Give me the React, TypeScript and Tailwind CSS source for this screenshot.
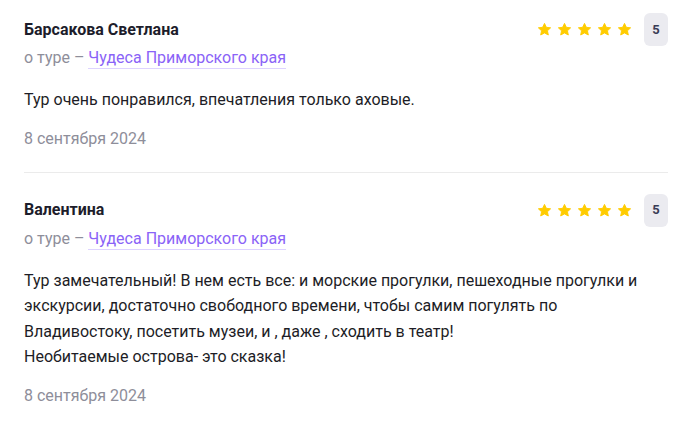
import React from 'react';

type Review = { name: string; tour: string; text: string[]; date: string; rating: number };

const reviews: Review[] = [
  {
    name: 'Барсакова Светлана',
    tour: 'Чудеса Приморского края',
    text: ['Тур очень понравился, впечатления только аховые.'],
    date: '8 сентября 2024',
    rating: 5,
  },
  {
    name: 'Валентина',
    tour: 'Чудеса Приморского края',
    text: [
      'Тур замечательный! В нем есть все: и морские прогулки, пешеходные прогулки и экскурсии, достаточно свободного времени, чтобы самим погулять по Владивостоку, посетить музеи, и , даже , сходить в театр!',
      'Необитаемые острова- это сказка!',
    ],
    date: '8 сентября 2024',
    rating: 5,
  },
];

const Star: React.FC = () => (
  <svg width="15" height="15" viewBox="0 0 24 24" className="text-[#ffcc00]">
    <path
      fill="currentColor"
      stroke="currentColor"
      strokeWidth="1.5"
      strokeLinejoin="round"
      d="M12 2.2l2.95 6.3 6.85.8-5.06 4.7 1.36 6.8L12 17.4l-6.1 3.4 1.36-6.8L2.2 9.3l6.85-.8z"
    />
  </svg>
);

const ReviewItem: React.FC<{ review: Review; first?: boolean; last?: boolean }> = ({ review, first, last }) => (
  <div className={`${first ? 'pt-[13px]' : 'pt-[21px]'} ${last ? '' : 'pb-[23px] border-b border-[#ebebeb]'}`}>
    <div className="flex items-center justify-between h-[33px]">
      <div className="text-[16px] leading-5 font-bold text-[#1d1d2b]">{review.name}</div>
      <div className="flex items-center">
        <div className="flex gap-[5px]">
          {Array.from({ length: review.rating }).map((_, i) => (
            <Star key={i} />
          ))}
        </div>
        <div className="ml-[12px] w-[24px] h-[33px] rounded-md bg-[#ebebf0] flex items-center justify-center text-[13px] font-bold text-[#3a3d57]">
          {review.rating}
        </div>
      </div>
    </div>
    <div className="mt-[2px] text-[16px] leading-5 text-[#8e8e9a]">
      о туре –{' '}
      <a href="#" className="text-[#8a63f7] border-b border-[#ddd3ff] pb-[1px]">
        {review.tour}
      </a>
    </div>
    <div className="mt-[19px] text-[16px] leading-[25.5px] text-[#1d1d26] max-w-[620px]">
      {review.text.map((p, i) => (
        <p key={i}>{p}</p>
      ))}
    </div>
    <div className="mt-[16px] text-[16px] leading-5 text-[#8e8e9a]">{review.date}</div>
  </div>
);

const App: React.FC = () => {
  return (
    <div className="min-h-screen bg-white pl-6 pr-[20px] font-['Roboto',sans-serif]">
      {reviews.map((r, i) => (
        <ReviewItem key={i} review={r} first={i === 0} last={i === reviews.length - 1} />
      ))}
    </div>
  );
};

export default App;
